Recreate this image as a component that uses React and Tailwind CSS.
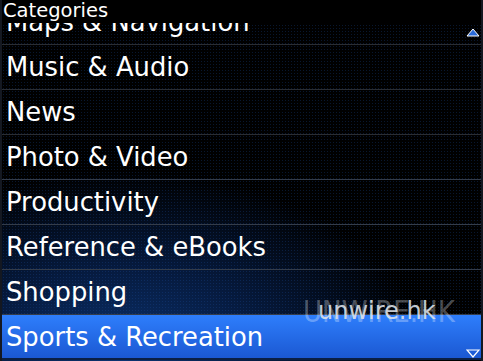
export default function App() {
  const rows = [
    "Maps & Navigation",
    "Music & Audio",
    "News",
    "Photo & Video",
    "Productivity",
    "Reference & eBooks",
    "Shopping",
  ];
  return (
    <div
      className="relative w-[483px] h-[361px] overflow-hidden bg-black text-white border-x-2 border-[#141821]"
      style={{ fontFamily: '"DejaVu Sans", sans-serif' }}
    >
      <div className="absolute inset-0 bg-[radial-gradient(ellipse_75%_62%_at_25%_100%,#0c3472_0%,#061b40_40%,#000_85%)]" />
      <div className="absolute inset-0 opacity-30 bg-[radial-gradient(circle,#1c4c9c_0.6px,transparent_1px)] bg-[length:3px_3px]" />
      <div className="relative flex flex-col">
        {rows.map((r, i) => (
          <div
            key={r}
            className={
              "h-[45px] flex items-center pl-[4px] pt-[1px] text-[25.8px] border-b " +
              (i < 3 ? "border-[#2a2d33]" : "border-[#343c4a]")
            }
          >
            {r}
          </div>
        ))}
        <div className="h-[45px] flex items-center pl-[4px] pt-[1px] text-[25.8px] bg-[linear-gradient(#2e7efc,#1b58d2)] border-b-2 border-[#0b1f44]">
          Sports &amp; Recreation
        </div>
      </div>
      <div className="absolute top-0 left-0 right-0 h-[23px] bg-black text-[19.5px] leading-[22px] pl-[1px]">
        Categories
      </div>
      <svg className="absolute left-[464px] top-[28px]" width="14" height="9" viewBox="0 0 14 9">
        <polygon points="7,1 13,8 1,8" fill="#2a6ad8" stroke="#fff" strokeWidth="1" />
      </svg>
      <svg className="absolute left-[464px] top-[349px]" width="14" height="9" viewBox="0 0 14 9">
        <polygon points="1,1 13,1 7,8" fill="none" stroke="#fff" strokeWidth="1.2" />
      </svg>
      <div className="absolute left-[301px] top-[297px] text-[30px] leading-none text-white/30 scale-x-[0.87] origin-left whitespace-nowrap">
        UNWIRE.HK
      </div>
      <div className="absolute left-[316px] top-[299px] text-[24px] leading-none text-[#dde2ea]/90 whitespace-nowrap">
        unwire.hk
      </div>
    </div>
  );
}
